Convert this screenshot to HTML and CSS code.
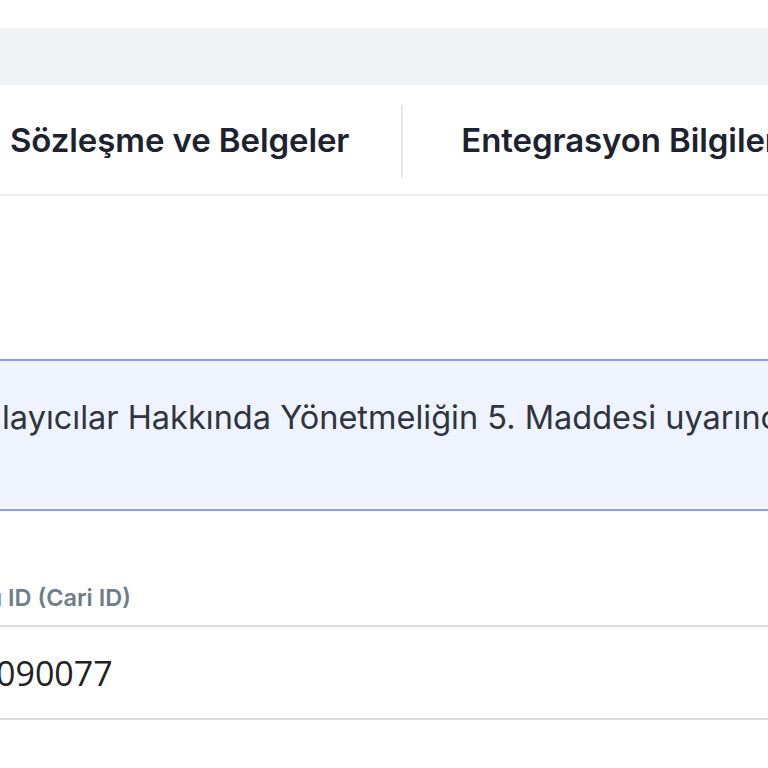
FILE: index.html
```html
<!DOCTYPE html>
<html lang="tr">
<head>
<meta charset="utf-8">
<link rel="stylesheet" href="styles.css">
</head>
<body>
<div class="page">
  <div class="topgap"></div>
  <div class="band"></div>
  <nav class="tabs">
    <div class="tab first">Sözleşme ve Belgeler</div>
    <div class="divider"></div>
    <div class="tab">Entegrasyon Bilgileri</div>
  </nav>
  <div class="spacer"></div>
  <div class="info">
    <p class="info-text">layıcılar Hakkında Yönetmeliğin 5. Maddesi uyarınca bilgilendirme</p>
  </div>
  <div class="field">
    <label class="field-label">ı ID (Cari ID)</label>
    <div class="field-input">090077</div>
  </div>
</div>
</body>
</html>
```

FILE: styles.css
```css
html, body {
  margin: 0;
  padding: 0;
  background: #ffffff;
  overflow: hidden;
}
.page {
  width: 768px;
  height: 768px;
  overflow: hidden;
  font-family: "Inter", "Liberation Sans", sans-serif;
}
.topgap {
  height: 28px;
  background: #ffffff;
}
.band {
  height: 57px;
  background: #f0f1f4;
}
.tabs {
  display: flex;
  align-items: center;
  height: 109px;
  border-bottom: 2px solid #eceef1;
  white-space: nowrap;
}
.tab {
  font-size: 33px;
  font-weight: 600;
  color: #1c2230;
  letter-spacing: -0.1px;
}
.tab.first {
  padding-left: 10px;
}
.divider {
  flex: none;
  width: 2px;
  height: 73px;
  margin-top: 4px;
  background: #e3e5e8;
  margin-left: 52px;
  margin-right: 58px;
}
.spacer {
  height: 163px;
}
.info {
  height: 148px;
  background: #eef3fe;
  border-top: 2px solid #8c9ee6;
  border-bottom: 2px solid #8c9ee6;
  display: flex;
  align-items: center;
  white-space: nowrap;
}
.info-text {
  margin: 0 0 36px 0;
  padding-left: 2px;
  font-size: 32.5px;
  font-weight: 400;
  color: #2e3440;
}
.field {
  display: flex;
  flex-direction: column;
  padding-top: 72px;
}
.field-label {
  font-size: 23.5px;
  font-weight: 600;
  color: #6f7c89;
  height: 42px;
  margin-left: -4px;
}
.field-input {
  height: 91px;
  border-top: 2px solid #dcdcdc;
  border-bottom: 2px solid #dcdcdc;
  display: flex;
  align-items: center;
  font-size: 34px;
  color: #222222;
  margin-left: -4px;
  font-family: "Open Sans", "Liberation Sans", sans-serif;
}
```
